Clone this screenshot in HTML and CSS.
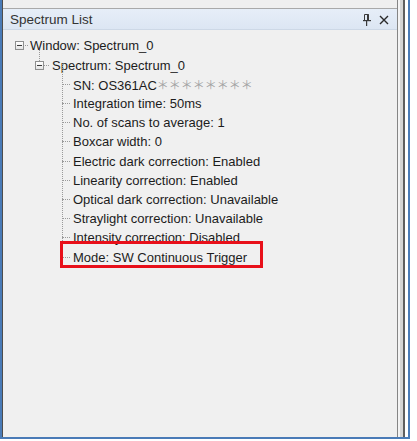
FILE: index.html
```html
<!DOCTYPE html>
<html>
<head>
<meta charset="utf-8">
<link rel="stylesheet" href="styles.css">
</head>
<body>
<div class="frame">
  <div class="dock">
    <div class="topstrip"></div>
    <div class="header">
      <span class="title">Spectrum List</span>
      <span class="tools">
        <svg class="pin" width="8" height="12" viewBox="0 0 8 12">
          <path d="M1.5 0.5 H5.5 V6.5 H1.5 Z" fill="none" stroke="#3a3a3a" stroke-width="1"/>
          <rect x="4" y="0.5" width="2" height="6" fill="#3a3a3a"/>
          <rect x="0" y="6" width="8" height="1.2" fill="#3a3a3a"/>
          <rect x="3" y="7" width="1.2" height="5" fill="#3a3a3a"/>
        </svg>
        <svg class="close" width="10" height="10" viewBox="0 0 10 10">
          <path d="M1 1 L9 9 M9 1 L1 9" stroke="#2a2a2a" stroke-width="1.4"/>
        </svg>
      </span>
    </div>
    <div class="tree">
      <div class="row lvl0"><span class="exp"></span><span class="stub s0"></span><span class="txt">Window: Spectrum_0</span></div>
      <div class="row lvl1"><span class="exp up"></span><span class="stub s1"></span><span class="txt">Spectrum: Spectrum_0</span></div>
      <div class="leaves">
        <div class="row leaf"><span class="stub s2"></span><span class="txt">SN: OS361AC<span class="mask">＊＊＊＊＊＊＊＊</span></span></div>
        <div class="row leaf"><span class="stub s2"></span><span class="txt">Integration time: 50ms</span></div>
        <div class="row leaf"><span class="stub s2"></span><span class="txt">No. of scans to average: 1</span></div>
        <div class="row leaf"><span class="stub s2"></span><span class="txt">Boxcar width: 0</span></div>
        <div class="row leaf"><span class="stub s2"></span><span class="txt">Electric dark correction: Enabled</span></div>
        <div class="row leaf"><span class="stub s2"></span><span class="txt">Linearity correction: Enabled</span></div>
        <div class="row leaf"><span class="stub s2"></span><span class="txt">Optical dark correction: Unavailable</span></div>
        <div class="row leaf"><span class="stub s2"></span><span class="txt">Straylight correction: Unavailable</span></div>
        <div class="row leaf"><span class="stub s2"></span><span class="txt">Intensity correction: Disabled</span></div>
        <div class="row leaf mode"><span class="stub s2"></span><span class="txt">Mode: SW Continuous Trigger</span><span class="highlight"></span></div>
      </div>
    </div>
  </div>
  <div class="split"></div>
  <div class="gap"></div>
</div>
</body>
</html>
```
FILE: styles.css
```css
html, body {
  margin: 0;
  padding: 0;
  background: #ffffff;
}
body {
  font-family: "Liberation Sans", Arial, sans-serif;
  font-size: 13px;
  color: #1c1c1c;
}
.frame {
  box-sizing: border-box;
  width: 410px;
  height: 439px;
  border-left: 2px solid #4a7bb7;
  border-right: 2px solid #4a7bb7;
  border-bottom: 2px solid #4a7bb7;
  display: flex;
  background: #ffffff;
}
.dock {
  width: 395px;
  box-sizing: border-box;
  border-left: 1px solid #4d4d4d;
  display: flex;
  flex-direction: column;
  background: #f0f0f0;
}
.topstrip {
  height: 8px;
  background: #efefef;
  border-bottom: 1px solid #a9a9a9;
}
.header {
  height: 21px;
  box-sizing: border-box;
  background: linear-gradient(#e6eef8, #dce6f3);
  border-bottom: 1px solid #cdd8e6;
  display: flex;
  align-items: center;
  padding-left: 7px;
  padding-right: 8px;
}
.title {
  flex: 1;
  font-size: 13.5px;
  color: #333333;
}
.tools {
  display: flex;
  align-items: center;
  gap: 8px;
}
.pin { display: block; margin-top: 1px; }
.close { display: block; margin-top: 2px; }
.tree {
  flex: 1;
  padding-top: 6.4px;
  background: #f0f0f0;
}
.row {
  height: 19.2px;
  display: flex;
  align-items: center;
  white-space: nowrap;
  position: relative;
}
.lvl0 { padding-left: 12px; }
.lvl1 { padding-left: 32px; }
.exp {
  width: 9px;
  height: 9px;
  box-sizing: border-box;
  border: 1px solid #8e8f8f;
  background: linear-gradient(#ffffff, #e4e4e4);
  position: relative;
  flex: none;
}
.exp::after {
  content: "";
  position: absolute;
  left: 1px;
  top: 3px;
  width: 5px;
  height: 1px;
  background: #3a3a3a;
}
.exp.up::before {
  content: "";
  position: absolute;
  left: 3px;
  top: -12px;
  height: 11px;
  border-left: 1px dotted #9a9a9a;
}
.stub {
  height: 0;
  border-top: 1px dotted #9a9a9a;
  flex: none;
}
.s0 { width: 3px; margin-left: 1px; margin-right: 2px; }
.s1 { width: 5px; margin-right: 3px; }
.s2 { width: 8px; margin-right: 3px; }
.leaves {
  position: relative;
  padding-left: 59px;
}
.leaves .row { padding-left: 0; }
.leaves::before {
  content: "";
  position: absolute;
  left: 59px;
  top: -11px;
  bottom: 9.6px;
  border-left: 1px dotted #9a9a9a;
}
.mask {
  font-family: "Noto Sans CJK TC", sans-serif;
  color: #a3a3a3;
  font-size: 12px;
}
.highlight {
  position: absolute;
  left: -2px;
  top: -6px;
  width: 203px;
  height: 27px;
  box-sizing: border-box;
  border: 3px solid #e8101a;
}
.split {
  width: 8px;
  box-sizing: border-box;
  border-left: 1px solid #858585;
  border-right: 2px solid #5e5e5e;
  background: linear-gradient(90deg, #f4f4f4 0, #f4f4f4 2px, #d4d4d4 2px);
}
.gap {
  width: 3px;
  background: #ffffff;
}
```
